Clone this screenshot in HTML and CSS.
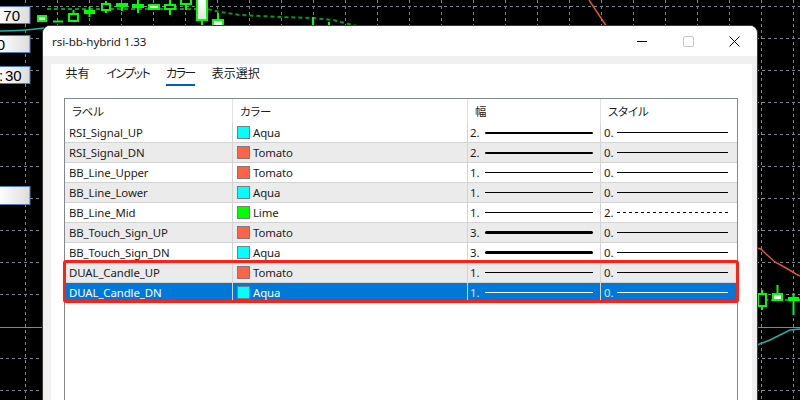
FILE: index.html
```html
<!DOCTYPE html>
<html>
<head>
  <meta charset="utf-8">
  <title>rsi-bb-hybrid 1.33</title>
  <link rel="stylesheet" href="styles.css">
</head>
<body>
  <!-- chart behind the dialog -->
  <svg class="chart" width="800" height="400" viewBox="0 0 800 400">
    <defs>
      <linearGradient id="tag" x1="0" x2="1" y1="0" y2="0">
        <stop offset="0" stop-color="#fff"/>
        <stop offset="1" stop-color="#dcdcdc"/>
      </linearGradient>
      <linearGradient id="bull" x1="0" x2="0" y1="0" y2="1">
        <stop offset="0" stop-color="#fff"/>
        <stop offset="1" stop-color="#e2e2e2"/>
      </linearGradient>
    </defs>
    <rect width="800" height="400" fill="#000"/>
    <path class="grid" d="M25.5 0V400M57.5 0V400M89.5 0V400M121.5 0V400M153.5 0V400M185.5 0V400M217.5 0V400M249.5 0V400M281.5 0V400M313.5 0V400M345.5 0V400M377.5 0V400M409.5 0V400M441.5 0V400M473.5 0V400M505.5 0V400M537.5 0V400M569.5 0V400M601.5 0V400M633.5 0V400M665.5 0V400M697.5 0V400M729.5 0V400M761.5 0V400M793.5 0V400M0 6.5H800M0 38.5H800M0 70.5H800M0 102.5H800M0 134.5H800M0 166.5H800M0 198.5H800M0 230.5H800M0 262.5H800M0 294.5H800M0 358.5H800M0 390.5H800"/>
    <path class="level" d="M0 327.5H800"/>

    <!-- moving averages / bands -->
    <path class="ma" d="M47 9H207L220 12L240 15L280 17L313 18L333 20L353 25L362 27"/>
    <path class="ma" d="M757 300H800"/>
    <path class="teal" d="M0 31C15 31 30 30 44 28"/>
    <path class="teal" d="M757 345L770 340L790 330L800 329"/>
    <path class="red" d="M589 0L607 27"/>
    <path class="red" d="M757 248L761 249L766 254L775 262L786 268L796 274L800 276"/>

    <!-- candles -->
    <g class="wick">
      <path d="M73.5 10V14M89.5 7V17M106 1V13M122 7V11M138 0V13M170 0V15M186 5V10M202 20V25M218 13V20M313 17V26M329 22V26"/>
      <path d="M762 290V310M777.5 285V294M793.5 293V315"/>
      <path d="M53 21.5H63"/>
    </g>
    <g class="candle">
      <rect x="38" y="16" width="8" height="5" fill="#fff"/>
      <rect x="69" y="14" width="9" height="7" fill="#000"/>
      <rect x="85" y="11" width="9" height="2" fill="#000"/>
      <rect x="102" y="4" width="8" height="6" fill="#000"/>
      <rect x="117" y="4" width="10" height="2" fill="#fff"/>
      <rect x="133" y="5" width="10" height="2" fill="#000"/>
      <rect x="149" y="5" width="10" height="4" fill="#fff"/>
      <rect x="165" y="5" width="10" height="4" fill="#000"/>
      <rect x="181" y="-1" width="10" height="5" fill="#000"/>
      <rect x="197" y="-1" width="10" height="21" fill="url(#bull)"/>
      <rect x="213" y="20" width="10" height="8" fill="url(#bull)"/>
      <rect x="758" y="294" width="8" height="12" fill="#000"/>
      <rect x="773" y="294" width="9" height="6" fill="#fff"/>
      <rect x="789" y="298" width="9" height="2" fill="#000"/>
    </g>

    <!-- price tags on the left edge -->
    <g class="tags">
      <rect x="-2" y="6.5" width="32" height="17"/>
      <rect x="-2" y="35.5" width="32" height="17"/>
      <rect x="-2" y="66.5" width="32" height="17"/>
      <rect x="-2" y="186.5" width="32" height="18"/>
    </g>
    <g class="tagtext">
      <text x="20" y="21" text-anchor="end">70</text>
      <text x="5" y="50" text-anchor="end">50</text>
      <text x="-1" y="81">:<tspan x="5">30</tspan></text>
    </g>
  </svg>

  <div class="dialog">
    <div class="titlebar">
      <span class="title">rsi-bb-hybrid 1.33</span>
      <div class="controls">
        <span class="ctl"><svg width="10" height="10"><path d="M0 5.5H10" stroke="#000"/></svg></span>
        <span class="ctl"><svg width="11" height="11"><rect x="0.5" y="0.5" width="10" height="10" rx="1.5" fill="none" stroke="#c6c6c6"/></svg></span>
        <span class="ctl"><svg width="11" height="11"><path d="M0.5 0.5L10.5 10.5M10.5 0.5L0.5 10.5" stroke="#000"/></svg></span>
      </div>
    </div>

    <div class="panel">
      <div class="tabs">
        <span class="tab">共有</span>
        <span class="tab kana">インプット</span>
        <span class="tab kana active">カラー</span>
        <span class="tab">表示選択</span>
      </div>

      <div class="list">
        <div class="row head">
          <div>ラベル</div><div>カラー</div><div>幅</div><div>スタイル</div>
        </div>
        <div class="row">
          <div>RSI_Signal_UP</div>
          <div><i class="swatch aqua"></i>Aqua</div>
          <div class="wd"><span class="num">2.</span><span class="stroke w2"></span></div>
          <div class="st"><span class="num">0.</span><span class="stroke"></span></div>
        </div>
        <div class="row alt">
          <div>RSI_Signal_DN</div>
          <div><i class="swatch tomato"></i>Tomato</div>
          <div class="wd"><span class="num">2.</span><span class="stroke w2"></span></div>
          <div class="st"><span class="num">0.</span><span class="stroke"></span></div>
        </div>
        <div class="row">
          <div>BB_Line_Upper</div>
          <div><i class="swatch tomato"></i>Tomato</div>
          <div class="wd"><span class="num">1.</span><span class="stroke"></span></div>
          <div class="st"><span class="num">0.</span><span class="stroke"></span></div>
        </div>
        <div class="row alt">
          <div>BB_Line_Lower</div>
          <div><i class="swatch aqua"></i>Aqua</div>
          <div class="wd"><span class="num">1.</span><span class="stroke"></span></div>
          <div class="st"><span class="num">0.</span><span class="stroke"></span></div>
        </div>
        <div class="row">
          <div>BB_Line_Mid</div>
          <div><i class="swatch lime"></i>Lime</div>
          <div class="wd"><span class="num">1.</span><span class="stroke"></span></div>
          <div class="st"><span class="num">2.</span><span class="stroke dot"></span></div>
        </div>
        <div class="row alt">
          <div>BB_Touch_Sign_UP</div>
          <div><i class="swatch tomato"></i>Tomato</div>
          <div class="wd"><span class="num">3.</span><span class="stroke w3"></span></div>
          <div class="st"><span class="num">0.</span><span class="stroke"></span></div>
        </div>
        <div class="row">
          <div>BB_Touch_Sign_DN</div>
          <div><i class="swatch aqua"></i>Aqua</div>
          <div class="wd"><span class="num">3.</span><span class="stroke w3"></span></div>
          <div class="st"><span class="num">0.</span><span class="stroke"></span></div>
        </div>
        <div class="row alt">
          <div>DUAL_Candle_UP</div>
          <div><i class="swatch tomato"></i>Tomato</div>
          <div class="wd"><span class="num">1.</span><span class="stroke"></span></div>
          <div class="st"><span class="num">0.</span><span class="stroke"></span></div>
        </div>
        <div class="row sel">
          <div>DUAL_Candle_DN</div>
          <div><i class="swatch aqua"></i>Aqua</div>
          <div class="wd"><span class="num">1.</span><span class="stroke"></span></div>
          <div class="st"><span class="num">0.</span><span class="stroke"></span></div>
        </div>
        <div class="mark"></div>
      </div>
    </div>
  </div>
</body>
</html>
```

FILE: styles.css
```css
html, body {
  margin: 0;
  padding: 0;
  height: 400px;
  overflow: hidden;
  background: #000;
}
body {
  font-family: "Noto Sans", "Noto Sans CJK JP", sans-serif;
  font-size: 11.4px;
  letter-spacing: -0.1px;
  color: #1b1b1b;
  font-feature-settings: "palt";
}

/* chart */
.chart {
  position: absolute;
  left: 0;
  top: 0;
}
.grid {
  fill: none;
  stroke: #778899;
  stroke-dasharray: 3 3;
}
.level {
  stroke: #778899;
}
.ma {
  fill: none;
  stroke: #0a9a0a;
  stroke-width: 2;
  stroke-dasharray: 4 3;
}
.teal {
  fill: none;
  stroke: #20b2aa;
  stroke-width: 1.5;
}
.red {
  fill: none;
  stroke: #e0563a;
  stroke-width: 1.5;
}
.wick path {
  stroke: #00ff00;
  stroke-width: 2;
}
.candle rect {
  stroke: #00ff00;
  stroke-width: 2;
}
.tags rect {
  fill: url(#tag);
  stroke: #4f7db5;
}
.tagtext text {
  font-family: "Liberation Sans", sans-serif;
  font-size: 15px;
  letter-spacing: 0;
  fill: #000;
}

/* dialog window */
.dialog {
  position: absolute;
  left: 42px;
  top: 25px;
  width: 714px;
  height: 400px;
  background: #f0f0f0;
  border: 1px solid #3a3a3a;
  border-radius: 8px 8px 0 0;
  overflow: hidden;
}
.titlebar {
  display: flex;
  align-items: center;
  height: 30px;
  background: #fff;
}
.title {
  padding-left: 9px;
  font-size: 11.6px;
}
.controls {
  display: flex;
  margin-left: auto;
  height: 30px;
}
.ctl {
  display: flex;
  align-items: center;
  justify-content: center;
  width: 46px;
}

.panel {
  margin: 8px 5px 0 8px;
  height: 360px;
  background: #fff;
}
.tabs {
  display: flex;
  padding-left: 6px;
  height: 22px;
  font-size: 12px;
  letter-spacing: 0;
}
.tab {
  margin: 0 8.5px;
  line-height: 20px;
  border-bottom: 2px solid transparent;
}
.tab.kana {
  letter-spacing: -1.6px;
}
.tab.active {
  border-bottom-color: #005fb8;
}

/* list view */
.list {
  position: relative;
  margin: 12px 14px 0 13px;
  height: 320px;
  border: 1px solid #828790;
}
.row {
  display: grid;
  grid-template-columns: 168px 235px 133px 136px;
  height: 19px;
  border-bottom: 1px solid #d4d4d4;
}
.row > div {
  display: flex;
  align-items: center;
  padding-left: 4px;
  border-right: 1px solid #d4d4d4;
  white-space: nowrap;
  overflow: hidden;
}
.row > div:last-child {
  border-right: none;
}
.row.alt {
  background: #ebebeb;
}
.row.sel {
  background: #0078d7;
  color: #fff;
}
.head {
  height: 24px;
  border-bottom: none;
}
.head > div {
  padding-left: 7px;
  border-right-color: #e0e0e0;
}

.swatch {
  width: 11px;
  height: 11px;
  margin-right: 3px;
  border: 1px solid #7c7c7c;
}
.aqua { background: #00ffff; }
.tomato { background: #ff6347; }
.lime { background: #00ff00; }

.row .wd {
  padding-left: 2px;
}
.row .st {
  padding-left: 3px;
}
.num {
  width: 15px;
}
.st .num {
  width: 13px;
}
.stroke {
  width: 108px;
  height: 1px;
  background: #000;
}
.st .stroke {
  width: 111px;
}
.w2 {
  height: 2px;
  border-radius: 1px;
}
.w3 {
  height: 3px;
  border-radius: 2px;
}
.dot {
  background: repeating-linear-gradient(90deg, #000 0 3px, transparent 3px 6px);
}
.sel .num {
  color: #d4e9fb;
}
.sel .stroke {
  background: #fff;
}

/* highlight frame around the DUAL rows */
.mark {
  position: absolute;
  left: -2px;
  top: 161px;
  width: 676px;
  height: 43px;
  box-sizing: border-box;
  border: 3px solid #ff2212;
  border-radius: 3px;
}
```
